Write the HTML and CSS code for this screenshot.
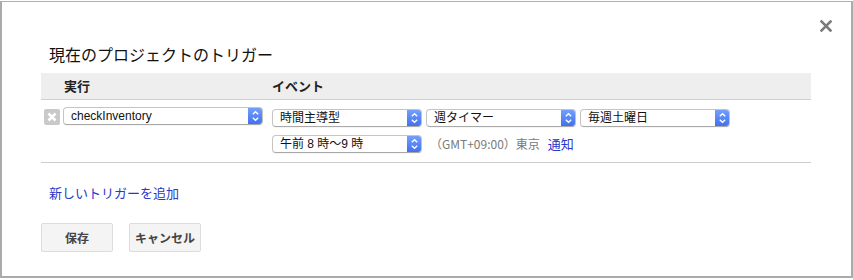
FILE: index.html
```html
<!DOCTYPE html>
<html lang="ja">
<head>
<meta charset="utf-8">
<title>トリガー</title>
<link rel="stylesheet" href="styles.css">
</head>
<body>
<div class="dialog">
  <button class="close" aria-label="閉じる">
    <svg width="12" height="12" viewBox="0 0 12 12"><path d="M1.5 1.5 L10.5 10.5 M10.5 1.5 L1.5 10.5" stroke="#7a7a7a" stroke-width="2.6" stroke-linecap="square"/></svg>
  </button>
  <div class="content">
    <h1 class="title">現在のプロジェクトのトリガー</h1>
    <div class="table">
      <div class="thead">
        <div class="th th-run">実行</div>
        <div class="th th-event">イベント</div>
      </div>
      <div class="trow">
        <div class="col-run">
          <span class="del">
            <svg width="16" height="16" viewBox="0 0 16 16"><rect width="16" height="16" rx="2" fill="#c9c9c9"/><path d="M4.5 4.5 L11.5 11.5 M11.5 4.5 L4.5 11.5" stroke="#fff" stroke-width="2.6"/></svg>
          </span>
          <div class="sel sel-fn"><span class="txt">checkInventory</span><span class="step"><svg width="15" height="18" viewBox="0 0 15 18"><path d="M4.8 7.3 L7.5 4.8 L10.2 7.3 M4.8 10.7 L7.5 13.2 L10.2 10.7" stroke="#fff" stroke-width="1.4" fill="none"/></svg></span></div>
        </div>
        <div class="col-event">
          <div class="line">
            <div class="sel"><span class="txt">時間主導型</span><span class="step"><svg width="15" height="18" viewBox="0 0 15 18"><path d="M4.8 7.3 L7.5 4.8 L10.2 7.3 M4.8 10.7 L7.5 13.2 L10.2 10.7" stroke="#fff" stroke-width="1.4" fill="none"/></svg></span></div>
            <div class="sel"><span class="txt">週タイマー</span><span class="step"><svg width="15" height="18" viewBox="0 0 15 18"><path d="M4.8 7.3 L7.5 4.8 L10.2 7.3 M4.8 10.7 L7.5 13.2 L10.2 10.7" stroke="#fff" stroke-width="1.4" fill="none"/></svg></span></div>
            <div class="sel"><span class="txt">毎週土曜日</span><span class="step"><svg width="15" height="18" viewBox="0 0 15 18"><path d="M4.8 7.3 L7.5 4.8 L10.2 7.3 M4.8 10.7 L7.5 13.2 L10.2 10.7" stroke="#fff" stroke-width="1.4" fill="none"/></svg></span></div>
          </div>
          <div class="line line2">
            <div class="sel"><span class="txt">午前 8 時〜9 時</span><span class="step"><svg width="15" height="18" viewBox="0 0 15 18"><path d="M4.8 7.3 L7.5 4.8 L10.2 7.3 M4.8 10.7 L7.5 13.2 L10.2 10.7" stroke="#fff" stroke-width="1.4" fill="none"/></svg></span></div>
            <span class="tz">（GMT+09:00）東京</span>
            <a class="link notify" href="#">通知</a>
          </div>
        </div>
      </div>
    </div>
    <a class="link add" href="#">新しいトリガーを追加</a>
    <div class="buttons">
      <button class="btn">保存</button>
      <button class="btn">キャンセル</button>
    </div>
  </div>
</div>
</body>
</html>
```

FILE: styles.css
```css
html, body {
  margin: 0;
  padding: 0;
  background: #ffffff;
}
body {
  width: 853px;
  height: 280px;
  overflow: hidden;
  font-family: "Noto Sans CJK JP", "Noto Sans", sans-serif;
  color: #222;
}
.dialog {
  position: relative;
  box-sizing: border-box;
  margin-top: 1px;
  width: 853px;
  height: 277px;
  border-top: 1px solid #b0b0b0;
  border-left: 2px solid #ababab;
  border-right: 2px solid #ababab;
  border-bottom: 2px solid #ababab;
  background: #fff;
}
.close {
  position: absolute;
  top: 16px;
  left: 816px;
  width: 16px;
  height: 16px;
  padding: 2px;
  border: 0;
  background: none;
  cursor: pointer;
}
.close svg { display: block; }
.content {
  padding-left: 39px;
  padding-top: 42px;
}
.title {
  margin: 0 0 9px 8px;
  font-size: 16px;
  line-height: 20px;
  font-weight: normal;
  color: #111;
  letter-spacing: 0;
}
.table {
  width: 770px;
}
.thead {
  display: flex;
  height: 26px;
  align-items: center;
  background: #eeeeee;
  border-bottom: 1px solid #cfcfcf;
}
.th {
  font-size: 13px;
  font-weight: bold;
  color: #222;
  line-height: 16px;
}
.th-run {
  width: 208px;
  padding-left: 23px;
}
.trow {
  display: flex;
  align-items: flex-start;
  padding-bottom: 9px;
  border-bottom: 1px solid #cccccc;
}
.col-run {
  width: 231px;
  display: flex;
  align-items: center;
  padding-top: 7px;
}
.del {
  width: 16px;
  height: 16px;
  margin-left: 3px;
  margin-right: 3px;
  margin-top: 2px;
}
.del svg { display: block; }
.col-event {
  padding-top: 9px;
  display: flex;
  flex-direction: column;
  gap: 8px;
}
.line {
  display: flex;
  align-items: center;
  gap: 4px;
}
.sel {
  box-sizing: border-box;
  width: 150px;
  height: 18px;
  display: flex;
  align-items: stretch;
  border: 1px solid #c4c4c4;
  border-bottom-color: #a9a9a9;
  border-radius: 4px;
  background: #fff;
  overflow: hidden;
  box-shadow: 0 1px 0 rgba(0,0,0,0.04);
}
.sel-fn {
  width: 200px;
}
.txt {
  flex: 1;
  padding-left: 7px;
  font-size: 12px;
  line-height: 16px;
  color: #111;
  font-family: "Liberation Sans", "Noto Sans CJK JP", sans-serif;
  white-space: nowrap;
}
.step {
  width: 15px;
  margin: -1px -1px -1px 0;
  background: linear-gradient(#76a2fb, #3d6ef2);
  border-radius: 0 4px 4px 0;
  display: flex;
  align-items: center;
  justify-content: center;
}
.step svg { display: block; }
.tz {
  margin-left: 4px;
  font-size: 12px;
  color: #7a7a7a;
  line-height: 16px;
}
.link {
  color: #2a37c9;
  text-decoration: none;
}
.notify {
  margin-left: 4px;
  font-size: 13px;
  line-height: 16px;
}
.add {
  display: block;
  width: max-content;
  margin: 22px 0 0 8px;
  font-size: 13px;
  line-height: 16px;
}
.buttons {
  display: flex;
  gap: 16px;
  margin-top: 22px;
}
.btn {
  box-sizing: border-box;
  width: 72px;
  height: 29px;
  padding: 0;
  border: 1px solid #dcdcdc;
  border-radius: 2px;
  background: #f4f4f4;
  color: #444;
  font-family: "Noto Sans CJK JP", sans-serif;
  font-size: 12px;
  font-weight: bold;
  cursor: pointer;
}
```
